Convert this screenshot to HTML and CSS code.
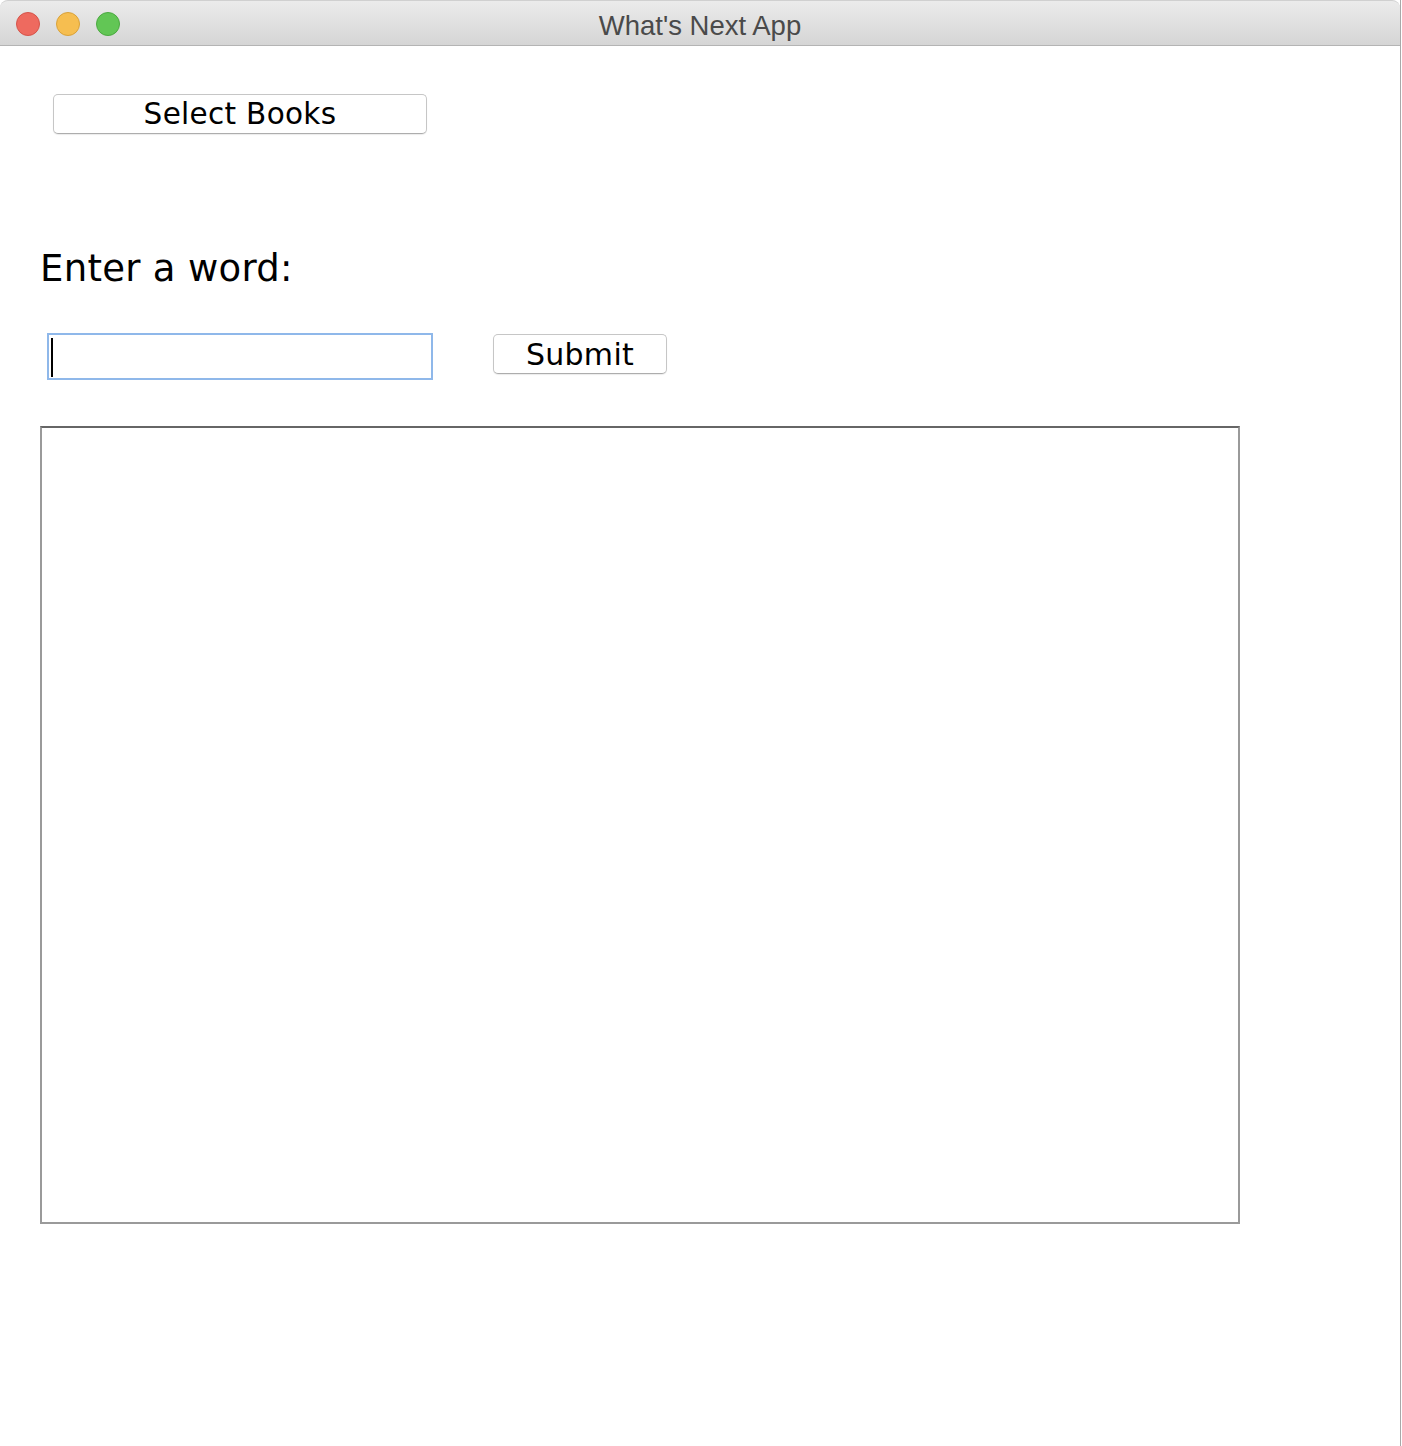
FILE: index.html
```html
<!DOCTYPE html>
<html>
<head>
<meta charset="utf-8">
<link rel="stylesheet" href="styles.css">
</head>
<body>
<div class="window">
  <div class="titlebar">
    <div class="lights">
      <span class="light red"></span>
      <span class="light yellow"></span>
      <span class="light green"></span>
    </div>
    <div class="title">What's Next App</div>
    <div></div>
  </div>
  <div class="content">
    <div class="row-select">
      <button class="btn btn-select">Select Books</button>
    </div>
    <div class="label">Enter a word:</div>
    <div class="row-input">
      <div class="input"><span class="caret"></span></div>
      <button class="btn btn-submit">Submit</button>
    </div>
    <div class="output"></div>
  </div>
</div>
</body>
</html>
```
FILE: styles.css
```css
html, body {
  margin: 0;
  padding: 0;
  background: #ffffff;
}
.window {
  width: 1401px;
  height: 1446px;
  border-right: 1px solid #a8a8a8;
  box-sizing: border-box;
  background: #ffffff;
}
.titlebar {
  height: 46px;
  box-sizing: border-box;
  border-top: 1px solid #d0d0d0;
  border-bottom: 1px solid #b4b4b4;
  border-radius: 8px 8px 0 0;
  background: linear-gradient(#ebebeb, #d5d5d5);
  display: grid;
  grid-template-columns: 1fr auto 1fr;
  align-items: center;
}
.lights {
  display: flex;
  gap: 16px;
  padding-left: 16px;
  padding-top: 1px;
}
.light {
  width: 24px;
  height: 24px;
  border-radius: 50%;
  box-sizing: border-box;
}
.red { background: #ee6a5f; border: 1px solid #d5544a; }
.yellow { background: #f6be50; border: 1px solid #d9a23a; }
.green { background: #62c655; border: 1px solid #4ba940; }
.title {
  font-family: "Liberation Sans", Arial, sans-serif;
  font-size: 27.5px;
  color: #4a4a4a;
  padding-top: 5px;
}
.content {
  padding-left: 40px;
}
.row-select {
  padding-top: 48px;
  padding-left: 13px;
}
.btn {
  font-family: "DejaVu Sans", Verdana, sans-serif;
  color: #000;
  background: #ffffff;
  border: 1px solid #c6c6c6;
  border-bottom-color: #adadad;
  border-radius: 5px;
  box-shadow: 0 1px 1px rgba(0,0,0,0.08);
  padding: 0;
  margin: 0;
  display: flex;
  align-items: center;
  justify-content: center;
}
.btn-select {
  width: 374px;
  height: 40px;
  font-size: 29.5px;
  letter-spacing: 0.3px;
}
.label {
  font-family: "DejaVu Sans", Verdana, sans-serif;
  font-size: 37px;
  color: #000;
  margin-top: 110px;
  line-height: 50px;
  letter-spacing: 0.3px;
}
.row-input {
  display: flex;
  align-items: flex-start;
  margin-top: 39px;
  padding-left: 7px;
}
.input {
  width: 386px;
  height: 47px;
  box-sizing: border-box;
  border: 2px solid #8fb8ea;
  background: #fff;
  padding: 3px 0 0 2px;
}
.caret {
  display: block;
  width: 2px;
  height: 39px;
  background: #000;
}
.btn-submit {
  width: 174px;
  height: 40px;
  font-size: 30px;
  margin-left: 60px;
  margin-top: 1px;
  letter-spacing: 0.3px;
}
.output {
  margin-top: 46px;
  width: 1200px;
  height: 798px;
  box-sizing: border-box;
  border: 2px solid #9a9a9a;
  border-top-color: #666666;
}
```
